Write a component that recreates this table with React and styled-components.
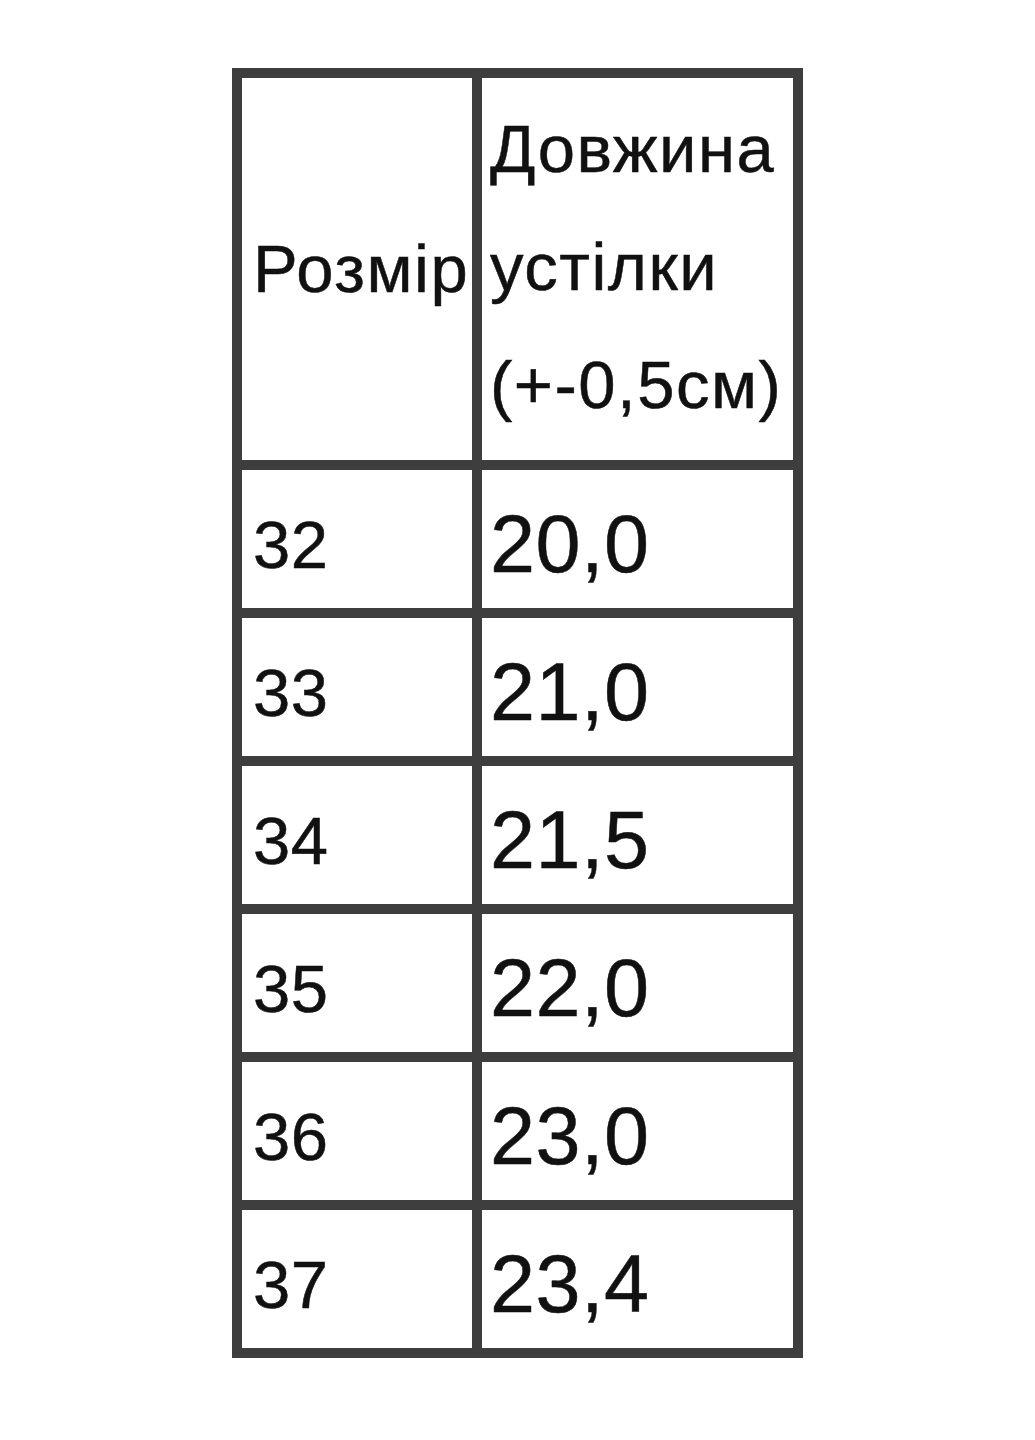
import React from 'react';
import styled, { createGlobalStyle } from 'styled-components';

const GlobalStyle = createGlobalStyle`
  body {
    margin: 0;
    background: #fff;
    font-family: "Liberation Sans", Arial, sans-serif;
  }
`;

const Page = styled.div`
  width: 1035px;
  height: 1440px;
  padding: 68px 0 0 232px;
  box-sizing: border-box;
`;

// dark background shows through the gaps as the table lines
const Table = styled.div`
  display: grid;
  grid-template-columns: 230px 311px;
  grid-template-rows: 382px repeat(6, 138px);
  gap: 10px;
  padding: 10px;
  width: max-content;
  background: #3e3e3e;
`;

const Cell = styled.div`
  background: #fff;
  color: #111;
  -webkit-text-stroke: 0.5px #111;
  display: flex;
  flex-direction: column;
  justify-content: center;
  padding-left: ${p => (p.$first ? '11px' : '8px')};
  padding-top: ${p => (p.$head ? '0' : '12px')};
  font-size: ${p => (p.$big ? '81px' : '67px')};
  line-height: ${p => (p.$head ? '118px' : '1.15')};
  letter-spacing: ${p => (p.$head ? '1.5px' : '0.5px')};
  white-space: nowrap;
`;

const HeadLines = styled.div`
  margin-top: -4px;
`;

const rows = [
  ['32', '20,0'],
  ['33', '21,0'],
  ['34', '21,5'],
  ['35', '22,0'],
  ['36', '23,0'],
  ['37', '23,4'],
];

export default function App() {
  return (
    <>
      <GlobalStyle />
      <Page>
        <Table>
          <Cell $first $head>Розмір</Cell>
          <Cell $head>
            <HeadLines>
              Довжина<br />устілки<br />(+-0,5см)
            </HeadLines>
          </Cell>
          {rows.map(([size, len]) => (
            <React.Fragment key={size}>
              <Cell $first>{size}</Cell>
              <Cell $big>{len}</Cell>
            </React.Fragment>
          ))}
        </Table>
      </Page>
    </>
  );
}
